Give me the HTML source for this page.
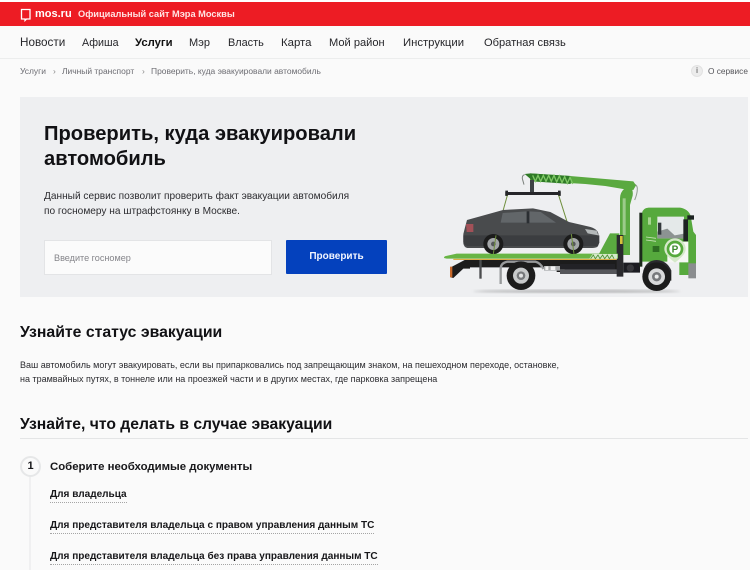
<!DOCTYPE html>
<html lang="ru">
<head>
<meta charset="utf-8">
<title>Проверить, куда эвакуировали автомобиль</title>
<style>
html,body{margin:0;padding:0;background:#fafafa}
body{position:relative;width:750px;height:570px;overflow:hidden;font-family:"Liberation Sans","DejaVu Sans",sans-serif;color:#1a1a1d}
.a{position:absolute;white-space:nowrap}
.b{position:absolute}
.nav{font-size:11.3px;line-height:16px;top:35px;color:#26262a}
.crumb{font-size:8.45px;line-height:12px;top:65px;color:#6c6c72}
.h{font-weight:bold;color:#111114}
.doc{left:50px;font-size:10.05px;line-height:14px;font-weight:bold;color:#17171a;border-bottom:1px dotted #a5a5a5}
.p{font-size:9px;line-height:13px;color:#2c2c30}
</style>
</head>
<body>
<div class="b" style="left:0;top:0;width:750px;height:2px;background:#fff"></div>
<div class="b" style="left:0;top:2px;width:750px;height:24px;background:#ed1c24"></div>
<svg class="b" style="left:20px;top:8px" width="12" height="14" viewBox="0 0 12 14"><path d="M1.500 1.500h8.500v9.500H6.500L5 12.500V11H1.500z" fill="none" stroke="#fff" stroke-width="1.300"/></svg>
<div class="a" style="left:35px;top:7px;font-size:11px;line-height:14px;font-weight:bold;color:#fff">mos.ru</div>
<div class="a" style="left:78px;top:8px;font-size:9.250px;line-height:13px;font-weight:bold;color:#ffe4e4">Официальный сайт Мэра Москвы</div>

<div class="b" style="left:0;top:58px;width:750px;height:1px;background:#eceded"></div>
<div class="a nav" style="left:20px;font-size:11.700px">Новости</div>
<div class="a nav" style="left:82px;font-size:10.700px">Афиша</div>
<div class="a nav" style="left:135px;font-weight:bold;color:#111">Услуги</div>
<div class="a nav" style="left:189px;font-size:11px">Мэр</div>
<div class="a nav" style="left:228px;font-size:10.900px">Власть</div>
<div class="a nav" style="left:281px;font-size:11.400px">Карта</div>
<div class="a nav" style="left:329px;font-size:11.100px">Мой район</div>
<div class="a nav" style="left:403px;font-size:11.300px">Инструкции</div>
<div class="a nav" style="left:484px;font-size:11.100px">Обратная связь</div>

<div class="a crumb" style="left:20px">Услуги</div>
<div class="a crumb" style="left:53px;color:#888">›</div>
<div class="a crumb" style="left:62px">Личный транспорт</div>
<div class="a crumb" style="left:142px;color:#888">›</div>
<div class="a crumb" style="left:151px">Проверить, куда эвакуировали автомобиль</div>
<div class="b" style="left:691px;top:65px;width:10px;height:10px;border-radius:50%;background:#ececec;border:1px solid #e2e2e2;font-size:8px;line-height:10px;text-align:center;color:#444">i</div>
<div class="a crumb" style="left:708px;color:#55555a;font-size:8.300px">О сервисе</div>

<div class="b" style="left:20px;top:97px;width:728px;height:200px;background:#eeeff1"></div>
<div class="a h" style="left:44px;top:121px;font-size:20.150px;line-height:26px">Проверить, куда эвакуировали</div>
<div class="a h" style="left:44px;top:146px;font-size:20.150px;line-height:26px">автомобиль</div>
<div class="a p" style="left:44px;top:189px;font-size:10.130px;line-height:16px">Данный сервис позволит проверить факт эвакуации автомобиля</div>
<div class="a p" style="left:44px;top:204px;font-size:10.130px;line-height:16px">по госномеру на штрафстоянку в Москве.</div>
<div class="b" style="left:44px;top:240px;width:226px;height:33px;background:#fbfbfb;border:1px solid #e3e4e6"></div>
<div class="a" style="left:54px;top:252px;font-size:9.100px;line-height:12px;color:#85858a">Введите госномер</div>
<div class="b" style="left:286px;top:240px;width:101px;height:34px;background:#0441bd;border-radius:1px;color:#f2f5ff;font-size:10px;line-height:34px;text-align:center;font-weight:bold">Проверить</div>

<svg class="b" style="left:430px;top:160px" width="290" height="140" viewBox="0 0 870 420">
<defs>
<filter id="bl"><feGaussianBlur stdDeviation="4"/></filter>
<filter id="s"><feGaussianBlur stdDeviation="0.800"/></filter>
</defs>
<ellipse cx="440" cy="394" rx="310" ry="5" fill="#b9babb" filter="url(#bl)"/>
<g filter="url(#s)">
<!-- crane column -->
<path d="M570 285V115q0-18 14-30h20q6 8 4 22l-8 28v150z" fill="#5aa93f"/>
<path d="M578 115h9v110h-9z" fill="#9ccb8a"/>
<path d="M604 70q18 2 18 16 0 16-8 34" fill="none" stroke="#8f9a8e" stroke-width="3"/>
<!-- crane arm -->
<path d="M300 40l120 8 190 16 8 12-8 14-24-2-60-10-60-6-70-4-96-4z" fill="#5aa93f"/>
<path d="M284 42l18-2 120 8v24l-112-8z" fill="#2f7a27"/>
<path d="M308 46l8 18 8-18 8 18 8-18 8 18 8-18 8 18 8-18 8 20 8-18 8 20 8-18 8 20 8-18 8 20" fill="none" stroke="#7fc866" stroke-width="4"/>
<path d="M284 44q-8 2-7 12l5 18" fill="none" stroke="#7a807c" stroke-width="3"/>
<path d="M300 60h12v36h-12z" fill="#3d4244"/>
<!-- spreader and straps -->
<path d="M226 96h166v9H226z" fill="#25272a"/>
<path d="M226 92h8v16h-8zM384 92h8v16h-8z" fill="#25272a"/>
<path d="M232 106l-34 122M386 106l38 120" stroke="#6f8f3e" stroke-width="3" fill="none"/>
<!-- triangle support -->
<path d="M505 285l35-65h28v62z" fill="#5aa93f"/>
<!-- chassis -->
<path d="M62 352V322l42-22h470v36H380v-14H120v4H100l-30 28z" fill="#1c1d1f"/>
<path d="M60 320h7v32h-7z" fill="#c8682a"/>
<path d="M148 300h7v56h-7z" fill="#4c4e50"/>
<path d="M342 318h62v14h-62z" fill="#a9abad"/>
<path d="M346 319h9v11h-9zM362 319h14v11h-14z" fill="#f2f2f2"/>
<path d="M390 312h165v16H390z" fill="#232426"/>
<path d="M390 328h175v14H390z" fill="#54575a"/>
<path d="M560 225h20v125h-20z" fill="#2a2b2d"/>
<path d="M570 228h8v24h-8z" fill="#d6c23a"/>
<path d="M580 308h50v30h-50z" fill="#1d1e20"/>
<circle cx="601" cy="324" r="11" fill="#37393c"/>
<!-- flatbed -->
<path d="M42 294q0-5 6-6l32-7h484v15H50z" fill="#67b544"/>
<path d="M70 298h490" stroke="#d9a62e" stroke-width="3"/>
<path d="M478 296l10-14h74v14z" fill="#d5e9c9"/>
<path d="M482 296l8-11 6 11 8-11 6 11 8-11 6 11 8-11 6 11 8-11 6 11" stroke="#4b8f34" stroke-width="2.500" fill="none"/>
<!-- rear fender -->
<path d="M212 372v-45q0-18 20-22h84q16 4 24 22" fill="none" stroke="#97999b" stroke-width="7"/>
<!-- cab -->
<path d="M636 160q2-16 20-17h94q24 4 32 24l8 48 8 10v120h-50v-40H636z" fill="#57a93c"/>
<path d="M628 158h9v162h-9z" fill="#1f2a1f"/>
<path d="M682 170h80v65h-80z" fill="#e4e9e9"/>
<path d="M682 215l30-9 22 20 28-5v14h-80z" fill="#8c9392"/>
<path d="M684 188h10v36h-10z" fill="#33383a"/>
<path d="M760 178h14v66h-14z" fill="#1f2324"/>
<path d="M772 166h20v13h-20z" fill="#1f2324"/>
<path d="M668 258h20v18h-20z" fill="#2d6e23"/>
<path d="M648 231l30 4M648 240l30 4" stroke="#c9e4bb" stroke-width="2.500"/>
<path d="M654 172h9v22h-9z" fill="#a6d590"/>
<path d="M712 245h63v62h-63z" fill="#f6f7f4"/>
<path d="M640 362v-30q8-30 40-32 32 2 44 32v30z" fill="#2b2c2e"/>
<path d="M735 308c-22-18-32-28-32-41a32 32 0 0 1 64 0c0 13-10 23-32 41z" fill="#d5e9c9"/>
<circle cx="735" cy="267" r="25" fill="#57a93c"/>
<circle cx="735" cy="267" r="17" fill="#fff"/>
<text x="735" y="278" font-family="Liberation Sans,sans-serif" font-size="30" font-weight="bold" text-anchor="middle" fill="#3d8a2d">P</text>
<path d="M775 310h23v45h-23z" fill="#8a8d8f"/>
<!-- truck wheels -->
<circle cx="273" cy="347" r="43" fill="#1c1d1f"/><circle cx="273" cy="347" r="24" fill="#c8cacb"/><circle cx="273" cy="347" r="13" fill="#77797b"/><circle cx="273" cy="347" r="6" fill="#e2e3e4"/>
<circle cx="680" cy="350" r="43" fill="#1c1d1f"/><circle cx="680" cy="350" r="25" fill="#d8d9da"/><circle cx="680" cy="350" r="14" fill="#77797b"/><circle cx="680" cy="350" r="6" fill="#eceded"/>
<!-- car -->
<path d="M100 246V222l5-20 6-22 50-14 58-16 90-5 52 11 56 30 60 14q24 6 28 20l2 24-4 16q-6 4-16 4H112q-10-2-12-14z" fill="#494b4e"/>
<path d="M100 226h408v22l-4 10H112q-10-2-12-12z" fill="#3a3c3f"/>
<path d="M218 159l72-5v34h-78zM298 154l34 2 46 32h-80z" fill="#626669"/>
<path d="M290 154h8v36h-8z" fill="#2c2e30"/>
<path d="M108 192h22v24h-20z" fill="#a25159"/>
<path d="M465 207l35 5 5 14-32-6z" fill="#b4b8b9"/>
<circle cx="190" cy="252" r="30" fill="#1b1c1e"/><circle cx="190" cy="252" r="18" fill="#a4a7a9"/><circle cx="190" cy="252" r="7" fill="#55585a"/>
<circle cx="430" cy="252" r="30" fill="#1b1c1e"/><circle cx="430" cy="252" r="18" fill="#a4a7a9"/><circle cx="430" cy="252" r="7" fill="#55585a"/>
<path d="M198 226l-8 56M424 222l8 60" stroke="#6f8f3e" stroke-width="3" fill="none"/>
</g>
</svg>

<div class="a h" style="left:20px;top:322px;font-size:15.800px;line-height:22px">Узнайте статус эвакуации</div>
<div class="a p" style="left:20px;top:359px">Ваш автомобиль могут эвакуировать, если вы припарковались под запрещающим знаком, на пешеходном переходе, остановке,</div>
<div class="a p" style="left:20px;top:373px">на трамвайных путях, в тоннеле или на проезжей части и в других местах, где парковка запрещена</div>

<div class="a h" style="left:20px;top:414px;font-size:15.700px;line-height:22px">Узнайте, что делать в случае эвакуации</div>
<div class="b" style="left:20px;top:438px;width:728px;height:1px;background:#e4e5e6"></div>

<div class="b" style="left:29px;top:476px;width:2px;height:94px;background:#f0f0f1"></div>
<div class="b" style="left:20px;top:456px;width:17px;height:17px;border-radius:50%;background:#fafafa;border:2px solid #e6e7e8;font-size:11px;line-height:17px;text-align:center;font-weight:bold;color:#17171a">1</div>
<div class="a" style="left:50px;top:460px;font-size:11.400px;line-height:15px;font-weight:bold;color:#17171a">Соберите необходимые документы</div>
<div class="a doc" style="top:488px">Для владельца</div>
<div class="a doc" style="top:519px">Для представителя владельца с правом управления данным ТС</div>
<div class="a doc" style="top:550px">Для представителя владельца без права управления данным ТС</div>
</body>
</html>
